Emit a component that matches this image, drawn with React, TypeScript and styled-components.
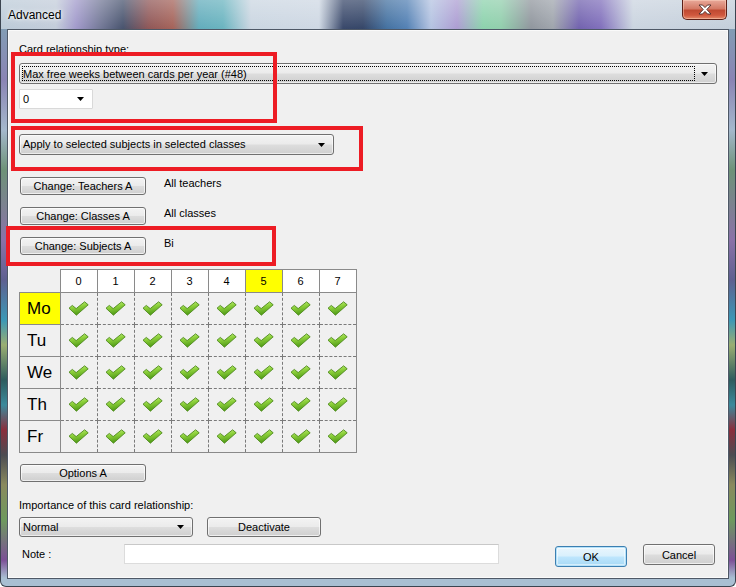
import styled, { createGlobalStyle } from 'styled-components';

const GlobalStyle = createGlobalStyle`
  html, body { margin: 0; padding: 0; background: #fff; }
  body {
    font-family: "Liberation Sans", Arial, sans-serif;
    font-size: 11px;
    color: #000;
  }
`;

const days = ['Mo', 'Tu', 'We', 'Th', 'Fr'];
const periods = [0, 1, 2, 3, 4, 5, 6, 7];

const rules = [
  { button: 'Change: Teachers A', value: 'All teachers' },
  { button: 'Change: Classes A', value: 'All classes' },
  { button: 'Change: Subjects A', value: 'Bi' },
];

function Arrow() {
  return (
    <svg width="7" height="4" viewBox="0 0 7 4">
      <polygon points="0,0 7,0 3.5,4" fill="#000" />
    </svg>
  );
}

function Check() {
  return (
    <svg width="21" height="15" viewBox="0 0 21 15">
      <defs>
        <linearGradient id="chk" x1="0" y1="0" x2="0.3" y2="1">
          <stop offset="0" stopColor="#d2f59a" />
          <stop offset="0.45" stopColor="#8fd23c" />
          <stop offset="1" stopColor="#4f9a16" />
        </linearGradient>
      </defs>
      <path
        d="M1 7.2 L4.3 4.4 L8.2 7.6 L16.6 0.8 L20.2 3.8 L8.4 14.2 Z"
        fill="url(#chk)"
        stroke="#4f8a1e"
        strokeWidth="0.9"
        strokeLinejoin="round"
      />
    </svg>
  );
}

export default function App() {
  return (
    <>
      <GlobalStyle />
      <Window>
        <TitleBar>
          <TitleText>Advanced</TitleText>
          <CloseButton>
            <svg width="14" height="11" viewBox="0 0 14 11">
              <path
                d="M1 1 L4.5 1 L7 3.6 L9.5 1 L13 1 L8.8 5.5 L13 10 L9.5 10 L7 7.4 L4.5 10 L1 10 L5.2 5.5 Z"
                fill="#fff"
                stroke="#4a2a28"
                strokeWidth="0.9"
                strokeLinejoin="round"
              />
            </svg>
          </CloseButton>
        </TitleBar>
        <Frame>
          <Panel>
            <Label>Card relationship type:</Label>
            <Combo $width={698} $top={7} $height={21}>
              <FocusText>Max free weeks between cards per year (#48)</FocusText>
              <Arrow />
            </Combo>
            <Combo $width={74} $top={5} $height={20} $white>
              <ComboText>0</ComboText>
              <Arrow />
            </Combo>
            <Combo $width={315} $top={25} $height={21}>
              <ComboText>Apply to selected subjects in selected classes</ComboText>
              <Arrow />
            </Combo>

            <RuleList>
              {rules.map((r) => (
                <RuleRow key={r.button}>
                  <Button $width={126}>{r.button}</Button>
                  <RuleValue>{r.value}</RuleValue>
                </RuleRow>
              ))}
            </RuleList>

            <Grid>
              <thead>
                <tr>
                  <Corner />
                  {periods.map((p) => (
                    <Head key={p} $hl={p === 5}>{p}</Head>
                  ))}
                </tr>
              </thead>
              <tbody>
                {days.map((d) => (
                  <tr key={d}>
                    <Day $hl={d === 'Mo'}>{d}</Day>
                    {periods.map((p) => (
                      <Cell key={p}>
                        <Check />
                      </Cell>
                    ))}
                  </tr>
                ))}
              </tbody>
            </Grid>

            <OptionsRow>
              <Button $width={126}>Options A</Button>
            </OptionsRow>

            <Label $top={17}>Importance of this card relationship:</Label>
            <ImportanceRow>
              <Combo $width={174} $top={0} $height={20}>
                <ComboText>Normal</ComboText>
                <Arrow />
              </Combo>
              <Button $width={114} $height={20}>Deactivate</Button>
            </ImportanceRow>

            <NoteRow>
              <NoteLabel>Note :</NoteLabel>
              <NoteInput />
              <DefaultButton>OK</DefaultButton>
              <Button $width={72} $height={21}>Cancel</Button>
            </NoteRow>
          </Panel>
        </Frame>

        <Marker style={{ left: 10, top: 52, width: 266, height: 71 }} />
        <Marker style={{ left: 10, top: 126, width: 352, height: 45 }} />
        <Marker style={{ left: 5, top: 226, width: 270, height: 40 }} />
      </Window>
    </>
  );
}

const Window = styled.div`
  position: relative;
  width: 736px;
  height: 587px;
  box-sizing: border-box;
  display: flex;
  flex-direction: column;
  border: 1px solid #3b4450;
  border-top: none;
  border-radius: 0 0 6px 6px;
  overflow: hidden;
  background: linear-gradient(
    to bottom,
    #7eaab4 0px,
    #8a84b4 80px,
    #a4b8cc 130px,
    #6e9278 170px,
    #8a72a8 240px,
    #5e6090 280px,
    #3c98b6 320px,
    #9aae72 345px,
    #2e5c5e 380px,
    #3c8a9c 405px,
    #8a2e3c 430px,
    #4c4c52 455px,
    #8a8a5e 485px,
    #6e9a5e 520px,
    #7c5096 560px,
    #a9bfd2 578px,
    #a9bfd2 587px
  );
`;

const TitleBar = styled.div`
  height: 29px;
  flex: none;
  display: flex;
  align-items: flex-start;
  justify-content: space-between;
  padding: 0 7px 0 7px;
  box-sizing: border-box;
  background:
    linear-gradient(to bottom, rgba(255, 255, 255, 0.3), rgba(255, 255, 255, 0.05)),
    linear-gradient(
      to right,
      #b8c8d6 0px,
      #c0cad8 55px,
      #9c94c8 75px,
      #6a7090 100px,
      #3e4a66 122px,
      #8a4e4e 148px,
      #a05a50 172px,
      #5aa8b8 198px,
      #62b0bc 222px,
      #c8d4e0 250px,
      #ccd6e2 318px,
      #2e3e62 342px,
      #2a3c60 362px,
      #3a6a9c 386px,
      #4a7ab0 406px,
      #b0c0e0 430px,
      #a898d0 456px,
      #86d0a8 482px,
      #8ccca8 500px,
      #8a9098 530px,
      #9aa0a8 552px,
      #6a5aaa 578px,
      #7a68b8 600px,
      #c8d2de 632px,
      #c0ccd8 736px
    );
`;

const TitleText = styled.div`
  font-size: 12px;
  line-height: 16px;
  margin-top: 7px;
  color: #000;
  text-shadow: 0 0 6px rgba(255, 255, 255, 0.9), 0 0 3px rgba(255, 255, 255, 0.9);
`;

const CloseButton = styled.div`
  width: 45px;
  height: 20px;
  margin-right: 1px;
  box-sizing: border-box;
  display: flex;
  align-items: center;
  justify-content: center;
  border: 1px solid #5c2018;
  border-top: none;
  border-radius: 0 0 5px 5px;
  background: linear-gradient(to bottom, #e9a99a 0%, #d47a66 45%, #c04a32 55%, #d0583e 80%, #e48a6a 100%);
  box-shadow: inset 0 0 0 1px rgba(255, 220, 200, 0.45);
`;

const Frame = styled.div`
  flex: 1;
  display: flex;
  padding: 0 6px 7px 6px;
  min-height: 0;
`;

const Panel = styled.div`
  flex: 1;
  display: flex;
  flex-direction: column;
  align-items: flex-start;
  padding: 13px 11px 0 11px;
  background: #f0f0f0;
  border: 1px solid #4e5866;
  box-shadow: inset 0 0 0 1px #fafafa;
`;

const Label = styled.div<{ $top?: number }>`
  line-height: 13px;
  margin-top: ${(p) => p.$top ?? 0}px;
  white-space: nowrap;
`;

const Combo = styled.div<{ $width: number; $top: number; $height: number; $white?: boolean }>`
  width: ${(p) => p.$width}px;
  height: ${(p) => p.$height}px;
  margin-top: ${(p) => p.$top}px;
  box-sizing: border-box;
  display: flex;
  align-items: center;
  padding: 0 8px 0 2px;
  gap: 6px;
  border: 1px solid ${(p) => (p.$white ? '#d9d9d9' : '#707070')};
  border-radius: ${(p) => (p.$white ? '1px' : '3px')};
  background: ${(p) =>
    p.$white
      ? '#fff'
      : 'linear-gradient(to bottom, #f3f3f3 0%, #ebebeb 48%, #dddddd 52%, #cfcfcf 100%)'};
  box-shadow: ${(p) => (p.$white ? 'none' : 'inset 0 0 0 1px rgba(255,255,255,0.6)')};
  flex: none;
`;

const ComboText = styled.span`
  flex: 1;
  padding-left: 1px;
  line-height: 13px;
  white-space: nowrap;
`;

const FocusText = styled.span`
  flex: 1;
  align-self: stretch;
  margin: 2px 0;
  display: flex;
  align-items: center;
  border: 1px dotted #000;
  white-space: nowrap;
`;

const RuleList = styled.div`
  display: flex;
  flex-direction: column;
  gap: 12px;
  margin-top: 22px;
  margin-left: 1px;
`;

const RuleRow = styled.div`
  display: flex;
  align-items: flex-start;
  gap: 18px;
`;

const RuleValue = styled.span`
  line-height: 13px;
`;

const Button = styled.div<{ $width: number; $height?: number }>`
  width: ${(p) => p.$width}px;
  height: ${(p) => p.$height ?? 18}px;
  box-sizing: border-box;
  display: flex;
  align-items: center;
  justify-content: center;
  border: 1px solid #707070;
  border-radius: 3px;
  background: linear-gradient(to bottom, #f3f3f3 0%, #ebebeb 48%, #dddddd 52%, #cfcfcf 100%);
  box-shadow: inset 0 0 0 1px rgba(255, 255, 255, 0.65);
  white-space: nowrap;
  flex: none;
`;

const DefaultButton = styled(Button).attrs({ $width: 72, $height: 21 })`
  margin-left: auto;
  margin-top: 2px;
  border-color: #3c7fb1;
  background: linear-gradient(to bottom, #eaf6fd 0%, #d9f0fc 48%, #bee6fd 52%, #a7d9f5 100%);
  box-shadow: inset 0 0 0 1px #b5e2fa, inset 0 0 0 2px rgba(255, 255, 255, 0.5);
`;

const Grid = styled.table`
  border-collapse: collapse;
  table-layout: fixed;
  margin-top: 14px;
`;

const Corner = styled.th`
  width: 40px;
  padding: 0;
  border: none;
`;

const Head = styled.th<{ $hl?: boolean }>`
  width: 36px;
  height: 22px;
  padding: 0;
  font-weight: normal;
  font-size: 11px;
  text-align: center;
  background: ${(p) => (p.$hl ? '#ffff00' : '#fff')};
  border: 1px solid #8a8a8a;
`;

const Day = styled.td<{ $hl?: boolean }>`
  height: 31px;
  padding: 0 0 0 7px;
  font-size: 17px;
  text-align: left;
  background: ${(p) => (p.$hl ? '#ffff00' : '#f0f0f0')};
  border: 1px solid #8a8a8a;
`;

const Cell = styled.td`
  padding: 0;
  text-align: center;
  vertical-align: middle;
  border: 1px dashed #7a7a7a;
  line-height: 0;

  &:last-child {
    border-right: 1px solid #8a8a8a;
  }

  tr:last-child > & {
    border-bottom: 1px solid #8a8a8a;
  }
`;

const OptionsRow = styled.div`
  margin-top: 11px;
  margin-left: 1px;
`;

const ImportanceRow = styled.div`
  display: flex;
  gap: 14px;
  margin-top: 5px;
`;

const NoteRow = styled.div`
  display: flex;
  align-items: flex-start;
  align-self: stretch;
  margin-top: 7px;
  padding-right: 2px;
  gap: 16px;
`;

const NoteLabel = styled.span`
  width: 102px;
  margin-left: 3px;
  margin-right: -16px;
  line-height: 20px;
`;

const NoteInput = styled.div`
  width: 375px;
  height: 20px;
  box-sizing: border-box;
  background: #fff;
  border: 1px solid #dcdcdc;
  border-top-color: #c8c8c8;
`;

const Marker = styled.div`
  position: absolute;
  box-sizing: border-box;
  border: 4px solid #ed1c24;
  pointer-events: none;
`;
